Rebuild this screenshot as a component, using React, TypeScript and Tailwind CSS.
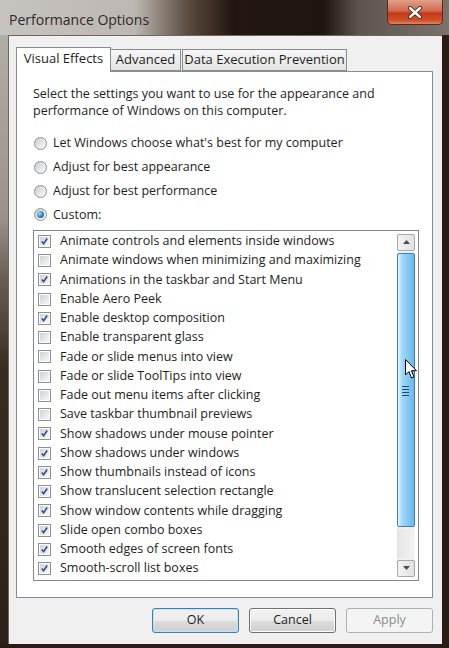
import React from "react";

const ITEMS: [string, boolean][] = [
  ["Animate controls and elements inside windows", true],
  ["Animate windows when minimizing and maximizing", false],
  ["Animations in the taskbar and Start Menu", true],
  ["Enable Aero Peek", false],
  ["Enable desktop composition", true],
  ["Enable transparent glass", false],
  ["Fade or slide menus into view", false],
  ["Fade or slide ToolTips into view", false],
  ["Fade out menu items after clicking", false],
  ["Save taskbar thumbnail previews", false],
  ["Show shadows under mouse pointer", true],
  ["Show shadows under windows", true],
  ["Show thumbnails instead of icons", true],
  ["Show translucent selection rectangle", true],
  ["Show window contents while dragging", true],
  ["Slide open combo boxes", true],
  ["Smooth edges of screen fonts", true],
  ["Smooth-scroll list boxes", true],
];

const RADIOS = [
  "Let Windows choose what's best for my computer",
  "Adjust for best appearance",
  "Adjust for best performance",
  "Custom:",
];

const CheckBox = ({ checked }: { checked: boolean }) => (
  <span className="flex h-[13px] w-[13px] shrink-0 items-center justify-center border border-[#8e8f8f] bg-white p-px">
    <span className="flex h-full w-full items-center justify-center bg-[linear-gradient(135deg,#cfd3d8,#f7f7f7)]">
      {checked && (
        <svg width="11" height="11" viewBox="0 0 11 11">
          <path d="M2.2 5.4 L4.4 8.2 L8.8 1.8" fill="none" stroke="#2f4a94" strokeWidth="1.9" />
        </svg>
      )}
    </span>
  </span>
);

const Radio = ({ checked }: { checked: boolean }) => (
  <span className="flex h-[13px] w-[13px] shrink-0 items-center justify-center rounded-full border border-[#8e8f8f] bg-[linear-gradient(135deg,#c9cdd2,#fbfbfb)]">
    {checked && (
      <span className="h-[7px] w-[7px] rounded-full bg-[radial-gradient(circle_at_35%_35%,#a8dcf7,#1f6fb4_65%,#134f8a)]" />
    )}
  </span>
);

const ArrowButton = ({ up }: { up: boolean }) => (
  <div className="flex h-[17px] w-full items-center justify-center rounded-[2px] border border-[#a8a8a8] bg-[linear-gradient(to_right,#f3f3f3,#e2e2e2)]">
    <svg width="7" height="4" viewBox="0 0 7 4">
      <path d={up ? "M0 4 L3.5 0 L7 4 Z" : "M0 0 L3.5 4 L7 0 Z"} fill="#4d4d4d" />
    </svg>
  </div>
);

export default function App() {
  return (
    <div className="relative flex h-[648px] w-[449px] flex-col overflow-hidden bg-[#2a1c14] font-['Open_Sans',sans-serif] text-[12px] text-[#1e1e1e]">
      {/* title bar */}
      <div className="flex h-[35px] shrink-0 items-start bg-[linear-gradient(to_right,#c7c3bf_0%,#bcb7b2_30%,#5a4a3e_42%,#22160f_52%,#1f150f_72%,#5e554e_80%,#7a726b_100%)]">
        <span className="mt-[9px] pl-[9px] text-[14px] text-[#2a2a2a]">Performance Options</span>
        <div className="ml-auto mr-[6px] flex h-[25px] w-[56px] items-center justify-center rounded-b-[5px] border border-t-0 border-[#5a2a1c] bg-[linear-gradient(to_bottom,#e0a08c_0%,#d26a4e_45%,#c23a18_55%,#d2502a_85%,#e8835e_100%)]">
          <svg width="16" height="13" viewBox="0 0 16 13">
            <path d="M3 2 L13 11 M13 2 L3 11" stroke="#3a1a10" strokeWidth="4" strokeLinecap="round" />
            <path d="M3 2 L13 11 M13 2 L3 11" stroke="#ffffff" strokeWidth="2.4" strokeLinecap="round" />
          </svg>
        </div>
      </div>

      <div className="flex flex-1">
        <div className="w-[8px] shrink-0 bg-[linear-gradient(to_bottom,#b3ada7_0%,#9a928a_30%,#6a5e54_40%,#3a2b21_55%,#2e2018_100%)]" />

        {/* client area */}
        <div className="flex flex-1 flex-col bg-[#f0f0f0] pl-[8px] pt-[12px] shadow-[inset_1px_1px_0_#6f6860]">
          <div className="flex h-[24px] items-end">
            <div className="relative z-10 -mb-px flex h-[25px] w-[95px] items-center justify-center border border-b-0 border-[#898c95] bg-white pb-[3px] text-[13px]">
              Visual Effects
            </div>
            <div className="flex h-[22px] w-[70px] items-center justify-center border border-l-0 border-[#898c95] bg-[linear-gradient(to_bottom,#f6f6f6,#e3e3e3)] text-[13px]">
              Advanced
            </div>
            <div className="ml-px flex h-[22px] w-[165px] items-center justify-center border border-[#898c95] bg-[linear-gradient(to_bottom,#f6f6f6,#e3e3e3)] text-[13px]">
              Data Execution Prevention
            </div>
          </div>

          <div className="flex h-[527px] w-[417px] flex-col border border-[#898c95] bg-white pl-[16px] pt-[14px]">
            <p className="text-[12.5px] leading-[16.5px]">
              Select the settings you want to use for the appearance and
              <br />
              performance of Windows on this computer.
            </p>

            <div className="mt-[13px] flex flex-col">
              {RADIOS.map((r, i) => (
                <div key={r} className="flex h-[23.7px] items-center gap-[6px] pl-px text-[12.5px]">
                  <Radio checked={i === 3} />
                  <span>{r}</span>
                </div>
              ))}
            </div>

            <div className="mt-[3px] flex h-[351px] w-[386px] border border-[#828790] bg-white">
              <div className="flex flex-1 flex-col pt-px">
                {ITEMS.map(([label, on]) => (
                  <div key={label} className="flex h-[19.25px] items-center gap-[9px] pl-[4px] text-[12.5px]">
                    <CheckBox checked={on} />
                    <span>{label}</span>
                  </div>
                ))}
              </div>

              <div className="my-[3px] mr-[3px] flex w-[18px] flex-col gap-[2px] bg-[#f0f0f0]">
                <ArrowButton up />
                <div className="relative h-[274px] rounded-[2px] border border-[#3c7fb1] bg-[linear-gradient(to_right,#e6f5fd,#a3d8f8_25%,#86caf2_60%,#6db8e8)]">
                  <div className="absolute left-[4px] top-[132px] flex w-[7px] flex-col gap-[2px]">
                    <span className="h-px bg-[#1d4f74]" />
                    <span className="h-px bg-[#1d4f74]" />
                    <span className="h-px bg-[#1d4f74]" />
                    <span className="h-px bg-[#1d4f74]" />
                  </div>
                </div>
                <div className="flex-1 bg-[linear-gradient(to_right,#e4e4e4,#f4f4f4)]" />
                <ArrowButton up={false} />
              </div>
            </div>
          </div>

          <div className="mt-[10px] flex w-[417px] justify-end gap-[10px]">
            <button className="h-[25px] w-[87px] rounded-[3px] border border-[#3c7fb1] bg-[linear-gradient(to_bottom,#f2f2f2_0%,#ebebeb_50%,#dddddd_51%,#cfcfcf_100%)] text-[12.5px] shadow-[inset_0_0_0_1px_#bfe3f8]">
              OK
            </button>
            <button className="h-[25px] w-[87px] rounded-[3px] border border-[#707070] bg-[linear-gradient(to_bottom,#f2f2f2_0%,#ebebeb_50%,#dddddd_51%,#cfcfcf_100%)] text-[12.5px] shadow-[inset_0_0_0_1px_#fcfcfc]">
              Cancel
            </button>
            <button className="h-[25px] w-[87px] rounded-[3px] border border-[#adb2b5] bg-[#f4f4f4] text-[12.5px] text-[#8b8b8b]">
              Apply
            </button>
          </div>
        </div>

        <div className="w-[7px] shrink-0 bg-[#2a1c14]" />
      </div>
      <div className="h-[4px] shrink-0 bg-[#2a1c14]" />

      {/* mouse pointer over scrollbar */}
      <svg className="absolute left-[405px] top-[359px]" width="13" height="21" viewBox="0 0 13 21">
        <path d="M0.5 0.5 L0.5 16 L4 12.5 L6.5 19 L9 18 L6.5 11.7 L11.5 11.7 Z" fill="#ffffff" stroke="#000000" strokeWidth="1" />
      </svg>
    </div>
  );
}
